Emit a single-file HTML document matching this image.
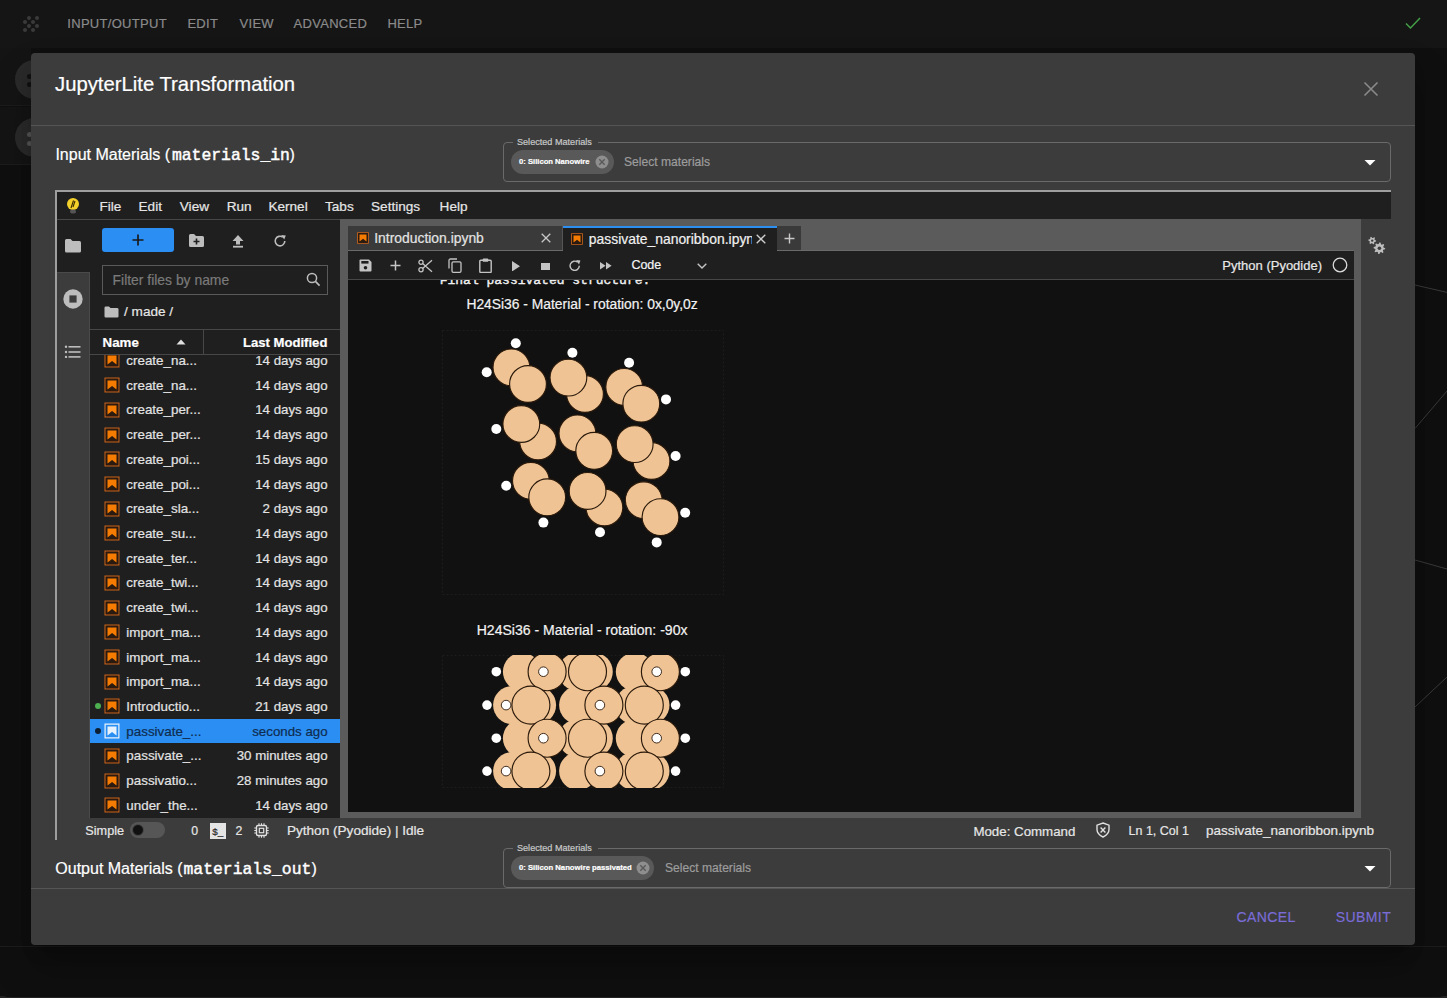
<!DOCTYPE html><html><head><meta charset="utf-8"><style>
html,body{margin:0;padding:0;width:1447px;height:998px;overflow:hidden;background:#0f0f0f;font-family:'Liberation Sans', sans-serif}
.r{position:absolute;box-sizing:border-box}
.t{position:absolute;line-height:1;white-space:nowrap;-webkit-text-stroke:0.2px currentColor}
</style></head><body>
<div class="r" style="left:0px;top:0px;width:1447px;height:998px;background:#0f0f0f;"></div>
<div class="r" style="left:0px;top:0px;width:1447px;height:48px;background:#151515;"></div>
<div class="r" style="left:0px;top:48px;width:31px;height:58px;background:#141414;border-bottom:1px solid #1c1c1c"></div>
<div class="r" style="left:0px;top:107px;width:31px;height:58px;background:#141414;border-bottom:1px solid #1c1c1c"></div>
<div class="r" style="left:14.5px;top:59.5px;width:39px;height:39px;border-radius:50%;background:#2a2a2a"></div>
<div class="r" style="left:14.5px;top:118px;width:39px;height:39px;border-radius:50%;background:#2a2a2a"></div>
<div class="r" style="left:26.5px;top:74.2px;width:5px;height:5px;border-radius:50%;background:#111"></div>
<div class="r" style="left:26.5px;top:82.3px;width:5px;height:5px;border-radius:50%;background:#111"></div>
<div class="r" style="left:26.5px;top:132.0px;width:5px;height:5px;border-radius:50%;background:#555"></div>
<div class="r" style="left:26.5px;top:140.5px;width:5px;height:5px;border-radius:50%;background:#555"></div>
<div class="r" style="left:27px;top:16px;width:4px;height:4px;border-radius:50%;background:#3a3a3a"></div>
<div class="r" style="left:35px;top:16px;width:4px;height:4px;border-radius:50%;background:#3a3a3a"></div>
<div class="r" style="left:23px;top:20px;width:4px;height:4px;border-radius:50%;background:#3a3a3a"></div>
<div class="r" style="left:31px;top:20px;width:4px;height:4px;border-radius:50%;background:#3a3a3a"></div>
<div class="r" style="left:27px;top:24px;width:4px;height:4px;border-radius:50%;background:#3a3a3a"></div>
<div class="r" style="left:35px;top:24px;width:4px;height:4px;border-radius:50%;background:#3a3a3a"></div>
<div class="r" style="left:23px;top:28px;width:4px;height:4px;border-radius:50%;background:#3a3a3a"></div>
<div class="r" style="left:31px;top:28px;width:4px;height:4px;border-radius:50%;background:#3a3a3a"></div>
<div class="t" style="left:67.30px;top:16.90px;font-size:13px;color:#8a8a8a;font-weight:400;font-family:'Liberation Sans', sans-serif;letter-spacing:0.3px;">INPUT/OUTPUT</div>
<div class="t" style="left:187.40px;top:16.90px;font-size:13px;color:#8a8a8a;font-weight:400;font-family:'Liberation Sans', sans-serif;letter-spacing:0.3px;">EDIT</div>
<div class="t" style="left:239.50px;top:16.90px;font-size:13px;color:#8a8a8a;font-weight:400;font-family:'Liberation Sans', sans-serif;letter-spacing:0.3px;">VIEW</div>
<div class="t" style="left:293.50px;top:16.90px;font-size:13px;color:#8a8a8a;font-weight:400;font-family:'Liberation Sans', sans-serif;letter-spacing:0.3px;">ADVANCED</div>
<div class="t" style="left:387.40px;top:16.90px;font-size:13px;color:#8a8a8a;font-weight:400;font-family:'Liberation Sans', sans-serif;letter-spacing:0.3px;">HELP</div>
<svg class="r" style="left:1404px;top:15px" width="18" height="16" viewBox="0 0 18 16"><path d="M2 8.5 L6.5 13 L16 3" fill="none" stroke="#43a047" stroke-width="1.5"/></svg>
<svg class="r" style="left:1415px;top:0" width="32" height="998" viewBox="0 0 32 998"><path d="M0 285 L32 292.4 M0 428.5 L32 391 M0 560 L32 569 M0 707 L32 677" stroke="#3a3a3a" stroke-width="1"/></svg>
<div class="r" style="left:0px;top:946px;width:1447px;height:1px;background:#1c1c1c;"></div>
<div class="r" style="left:0px;top:996px;width:1447px;height:2px;background:#242424;"></div>
<div class="r" style="left:0;top:947px;width:1447px;height:49.5px;background:#0f0f0f;border-radius:0 0 8px 8px"></div>
<div class="r" style="left:31px;top:53px;width:1384px;height:892px;background:#3c3c3c;border-radius:4px;box-shadow:0 11px 15px -7px rgba(0,0,0,.3),0 24px 38px 3px rgba(0,0,0,.2)"></div>
<div class="t" style="left:55.00px;top:73.82px;font-size:20.3px;color:#fff;font-weight:400;font-family:'Liberation Sans', sans-serif;letter-spacing:0px;">JupyterLite Transformation</div>
<svg class="r" style="left:1363px;top:81px" width="16" height="16" viewBox="0 0 16 16"><path d="M1.5 1.5 L14.5 14.5 M14.5 1.5 L1.5 14.5" stroke="#8a8a8a" stroke-width="1.6"/></svg>
<div class="r" style="left:31px;top:125px;width:1384px;height:1px;background:#555555;"></div>
<div class="t" style="left:55.40px;top:146.76px;font-size:16px;color:#fff;font-weight:400;font-family:'Liberation Sans', sans-serif;letter-spacing:0px;">Input Materials (</div>
<div class="t" style="left:171.90px;top:147.74px;font-size:16.4px;color:#fff;font-weight:400;font-family:'Liberation Mono', monospace;letter-spacing:0px;-webkit-text-stroke:0.45px #fff">materials_in</div>
<div class="t" style="left:289.50px;top:146.76px;font-size:16px;color:#fff;font-weight:400;font-family:'Liberation Sans', sans-serif;letter-spacing:0px;">)</div>
<div class="r" style="left:503px;top:142px;width:888px;height:40px;border:1px solid #6a6a6a;border-radius:4px"></div>
<div class="r" style="left:512.5px;top:140px;width:85px;height:4px;background:#3c3c3c;"></div>
<div class="t" style="left:517.00px;top:137.50px;font-size:9.1px;color:#c8c8c8;font-weight:400;font-family:'Liberation Sans', sans-serif;letter-spacing:0px;">Selected Materials</div>
<div class="r" style="left:511px;top:150px;width:102.6px;height:24px;border-radius:12px;background:#595959"></div>
<div class="t" style="left:519.00px;top:157.82px;font-size:7.65px;color:#fff;font-weight:700;font-family:'Liberation Sans', sans-serif;letter-spacing:0px;">0: Silicon Nanowire</div>
<svg class="r" style="left:595.1px;top:155px" width="14" height="14" viewBox="0 0 14 14"><circle cx="7" cy="7" r="6.5" fill="#8e8e8e"/><path d="M4.3 4.3 L9.7 9.7 M9.7 4.3 L4.3 9.7" stroke="#595959" stroke-width="1.4"/></svg>
<div class="t" style="left:624.00px;top:156.16px;font-size:12.1px;color:#9c9c9c;font-weight:400;font-family:'Liberation Sans', sans-serif;letter-spacing:0px;">Select materials</div>
<svg class="r" style="left:1364px;top:160px" width="12" height="6" viewBox="0 0 12 6"><path d="M0.5 0 L11.5 0 L6 5.5Z" fill="#fff"/></svg>
<div class="r" style="left:55px;top:190px;width:1336px;height:2px;background:#9e9e9e;"></div>
<div class="r" style="left:55px;top:190px;width:2px;height:650px;background:#9e9e9e;"></div>
<div class="r" style="left:57px;top:192px;width:1334px;height:27px;background:#1f1f1f;"></div>
<div class="r" style="left:57px;top:219px;width:1334px;height:1px;background:#474747;"></div>
<svg class="r" style="left:66px;top:197px" width="14" height="18" viewBox="0 0 14 18"><circle cx="7" cy="7" r="6" fill="#f3d02a"/><path d="M5 11 L7.5 3.5 M7 10 L9 4" stroke="#3a2a00" stroke-width="1.1"/><ellipse cx="7" cy="14.5" rx="3" ry="2" fill="#555"/></svg>
<div class="t" style="left:99.40px;top:199.69px;font-size:13.6px;color:#e6e6e6;font-weight:400;font-family:'Liberation Sans', sans-serif;letter-spacing:0px;">File</div>
<div class="t" style="left:138.50px;top:199.69px;font-size:13.6px;color:#e6e6e6;font-weight:400;font-family:'Liberation Sans', sans-serif;letter-spacing:0px;">Edit</div>
<div class="t" style="left:179.80px;top:199.69px;font-size:13.6px;color:#e6e6e6;font-weight:400;font-family:'Liberation Sans', sans-serif;letter-spacing:0px;">View</div>
<div class="t" style="left:226.70px;top:199.69px;font-size:13.6px;color:#e6e6e6;font-weight:400;font-family:'Liberation Sans', sans-serif;letter-spacing:0px;">Run</div>
<div class="t" style="left:268.40px;top:199.69px;font-size:13.6px;color:#e6e6e6;font-weight:400;font-family:'Liberation Sans', sans-serif;letter-spacing:0px;">Kernel</div>
<div class="t" style="left:325.00px;top:199.69px;font-size:13.6px;color:#e6e6e6;font-weight:400;font-family:'Liberation Sans', sans-serif;letter-spacing:0px;">Tabs</div>
<div class="t" style="left:371.00px;top:199.69px;font-size:13.6px;color:#e6e6e6;font-weight:400;font-family:'Liberation Sans', sans-serif;letter-spacing:0px;">Settings</div>
<div class="t" style="left:439.60px;top:199.69px;font-size:13.6px;color:#e6e6e6;font-weight:400;font-family:'Liberation Sans', sans-serif;letter-spacing:0px;">Help</div>
<div class="r" style="left:57px;top:220px;width:33px;height:598px;background:#3c3c3c;"></div>
<div class="r" style="left:57px;top:220px;width:33px;height:52px;background:#1f1f1f;"></div>
<div class="r" style="left:57px;top:272px;width:33px;height:1px;background:#4a4a4a;"></div>
<div class="r" style="left:89px;top:272px;width:1px;height:546px;background:#4a4a4a;"></div>
<svg class="r" style="left:64px;top:238px" width="18" height="15" viewBox="0 0 18 15"><path d="M1 2.5 Q1 1 2.5 1 L6.5 1 L8.5 3 L15.5 3 Q17 3 17 4.5 L17 13 Q17 14.5 15.5 14.5 L2.5 14.5 Q1 14.5 1 13 Z" fill="#bdbdbd"/></svg>
<svg class="r" style="left:63px;top:289px" width="20" height="20" viewBox="0 0 20 20"><circle cx="10" cy="10" r="9.7" fill="#bdbdbd"/><rect x="6.4" y="6.4" width="7.2" height="7.2" fill="#3c3c3c"/></svg>
<svg class="r" style="left:64px;top:344px" width="18" height="16" viewBox="0 0 18 16"><g fill="#bdbdbd"><circle cx="2" cy="2.8" r="1.2"/><circle cx="2" cy="8" r="1.2"/><circle cx="2" cy="12.9" r="1.2"/><rect x="4.5" y="2" width="12" height="1.6"/><rect x="4.5" y="7.2" width="12" height="1.6"/><rect x="4.5" y="12.1" width="12" height="1.6"/></g></svg>
<div class="r" style="left:90px;top:220px;width:250px;height:598px;background:#1f1f1f;"></div>
<div class="r" style="left:102px;top:228px;width:72px;height:24px;background:#2a8ef2;border-radius:3px"></div>
<svg class="r" style="left:131px;top:233px" width="14" height="14" viewBox="0 0 14 14"><path d="M7 1.5 V12.5 M1.5 7 H12.5" stroke="#1a1a1a" stroke-width="1.7"/></svg>
<svg class="r" style="left:188px;top:233px" width="17" height="15" viewBox="0 0 17 15"><path d="M1 2.5 Q1 1 2.5 1 L6 1 L8 3 L14.5 3 Q16 3 16 4.5 L16 12.5 Q16 14 14.5 14 L2.5 14 Q1 14 1 12.5 Z" fill="#bdbdbd"/><path d="M8.5 5.5 V11.5 M5.5 8.5 H11.5" stroke="#1f1f1f" stroke-width="1.6"/></svg>
<svg class="r" style="left:231px;top:234px" width="14" height="14" viewBox="0 0 14 14"><path d="M7 1 L12.5 7 H9 V10.5 H5 V7 H1.5 Z" fill="#bdbdbd"/><rect x="2" y="11.8" width="10" height="1.8" fill="#bdbdbd"/></svg>
<svg class="r" style="left:273px;top:234px" width="14" height="14" viewBox="0 0 14 14"><path d="M11.8 7 A4.8 4.8 0 1 1 9.9 3.2" fill="none" stroke="#bdbdbd" stroke-width="1.6"/><path d="M8.2 1 L12.8 1.6 L11.2 5.6 Z" fill="#bdbdbd"/></svg>
<div class="r" style="left:102px;top:265px;width:226px;height:30px;border:1px solid #5a5a5a"></div>
<div class="t" style="left:112.60px;top:273.53px;font-size:13.9px;color:#7a7a7a;font-weight:400;font-family:'Liberation Sans', sans-serif;letter-spacing:0px;">Filter files by name</div>
<svg class="r" style="left:306px;top:272px" width="15" height="15" viewBox="0 0 15 15"><circle cx="6" cy="6" r="4.6" fill="none" stroke="#bdbdbd" stroke-width="1.5"/><path d="M9.4 9.4 L13.6 13.6" stroke="#bdbdbd" stroke-width="1.7"/></svg>
<svg class="r" style="left:104px;top:306px" width="15" height="12" viewBox="0 0 15 12"><path d="M0.5 1.8 Q0.5 0.5 1.8 0.5 L5 0.5 L6.5 2 L13 2 Q14.5 2 14.5 3.3 L14.5 10.5 Q14.5 11.5 13.2 11.5 L1.8 11.5 Q0.5 11.5 0.5 10.5 Z" fill="#bdbdbd"/></svg>
<div class="t" style="left:124.00px;top:304.79px;font-size:13.6px;color:#e6e6e6;font-weight:400;font-family:'Liberation Sans', sans-serif;letter-spacing:0px;">/ made /</div>
<div class="r" style="left:90px;top:329px;width:250px;height:1px;background:#474747;"></div>
<div class="r" style="left:90px;top:354px;width:250px;height:1px;background:#474747;"></div>
<div class="r" style="left:203px;top:330px;width:1px;height:24px;background:#474747;"></div>
<div class="t" style="left:102.60px;top:336.24px;font-size:13.3px;color:#fff;font-weight:700;font-family:'Liberation Sans', sans-serif;letter-spacing:0px;">Name</div>
<svg class="r" style="left:176px;top:339px" width="10" height="6" viewBox="0 0 10 6"><path d="M0.5 5.5 L5 0.5 L9.5 5.5Z" fill="#e0e0e0"/></svg>
<div class="t" style="right:1119.60px;top:336.41px;font-size:13.1px;color:#fff;font-weight:700;font-family:'Liberation Sans', sans-serif;letter-spacing:0px">Last Modified</div>
<div class="r" style="left:0;top:355px;width:1447px;height:463px;overflow:hidden">
<svg class="r" style="left:103px;top:-3.60px" width="18" height="18" viewBox="0 0 22 22"><path d="M18.7 3.3v15.4H3.3V3.3h15.4m1.5-1.5H1.8v18.3h18.3l.1-18.3z" fill="#c8621a"/><rect x="3.3" y="3.3" width="15.4" height="15.4" fill="#2a1a10"/><path d="M16.5 16.5l-5.4-4.3-5.6 4.3v-11h11z" fill="#f57c00"/></svg>
<div class="t" style="left:126.3px;top:-1.04px;font-size:13.4px;color:#e3e3e3">create_na...</div>
<div class="t" style="right:1119.4px;top:-1.04px;font-size:13.3px;color:#e3e3e3">14 days ago</div>
<svg class="r" style="left:103px;top:21.12px" width="18" height="18" viewBox="0 0 22 22"><path d="M18.7 3.3v15.4H3.3V3.3h15.4m1.5-1.5H1.8v18.3h18.3l.1-18.3z" fill="#c8621a"/><rect x="3.3" y="3.3" width="15.4" height="15.4" fill="#2a1a10"/><path d="M16.5 16.5l-5.4-4.3-5.6 4.3v-11h11z" fill="#f57c00"/></svg>
<div class="t" style="left:126.3px;top:23.68px;font-size:13.4px;color:#e3e3e3">create_na...</div>
<div class="t" style="right:1119.4px;top:23.68px;font-size:13.3px;color:#e3e3e3">14 days ago</div>
<svg class="r" style="left:103px;top:45.84px" width="18" height="18" viewBox="0 0 22 22"><path d="M18.7 3.3v15.4H3.3V3.3h15.4m1.5-1.5H1.8v18.3h18.3l.1-18.3z" fill="#c8621a"/><rect x="3.3" y="3.3" width="15.4" height="15.4" fill="#2a1a10"/><path d="M16.5 16.5l-5.4-4.3-5.6 4.3v-11h11z" fill="#f57c00"/></svg>
<div class="t" style="left:126.3px;top:48.40px;font-size:13.4px;color:#e3e3e3">create_per...</div>
<div class="t" style="right:1119.4px;top:48.40px;font-size:13.3px;color:#e3e3e3">14 days ago</div>
<svg class="r" style="left:103px;top:70.56px" width="18" height="18" viewBox="0 0 22 22"><path d="M18.7 3.3v15.4H3.3V3.3h15.4m1.5-1.5H1.8v18.3h18.3l.1-18.3z" fill="#c8621a"/><rect x="3.3" y="3.3" width="15.4" height="15.4" fill="#2a1a10"/><path d="M16.5 16.5l-5.4-4.3-5.6 4.3v-11h11z" fill="#f57c00"/></svg>
<div class="t" style="left:126.3px;top:73.12px;font-size:13.4px;color:#e3e3e3">create_per...</div>
<div class="t" style="right:1119.4px;top:73.12px;font-size:13.3px;color:#e3e3e3">14 days ago</div>
<svg class="r" style="left:103px;top:95.28px" width="18" height="18" viewBox="0 0 22 22"><path d="M18.7 3.3v15.4H3.3V3.3h15.4m1.5-1.5H1.8v18.3h18.3l.1-18.3z" fill="#c8621a"/><rect x="3.3" y="3.3" width="15.4" height="15.4" fill="#2a1a10"/><path d="M16.5 16.5l-5.4-4.3-5.6 4.3v-11h11z" fill="#f57c00"/></svg>
<div class="t" style="left:126.3px;top:97.84px;font-size:13.4px;color:#e3e3e3">create_poi...</div>
<div class="t" style="right:1119.4px;top:97.84px;font-size:13.3px;color:#e3e3e3">15 days ago</div>
<svg class="r" style="left:103px;top:120.00px" width="18" height="18" viewBox="0 0 22 22"><path d="M18.7 3.3v15.4H3.3V3.3h15.4m1.5-1.5H1.8v18.3h18.3l.1-18.3z" fill="#c8621a"/><rect x="3.3" y="3.3" width="15.4" height="15.4" fill="#2a1a10"/><path d="M16.5 16.5l-5.4-4.3-5.6 4.3v-11h11z" fill="#f57c00"/></svg>
<div class="t" style="left:126.3px;top:122.56px;font-size:13.4px;color:#e3e3e3">create_poi...</div>
<div class="t" style="right:1119.4px;top:122.56px;font-size:13.3px;color:#e3e3e3">14 days ago</div>
<svg class="r" style="left:103px;top:144.72px" width="18" height="18" viewBox="0 0 22 22"><path d="M18.7 3.3v15.4H3.3V3.3h15.4m1.5-1.5H1.8v18.3h18.3l.1-18.3z" fill="#c8621a"/><rect x="3.3" y="3.3" width="15.4" height="15.4" fill="#2a1a10"/><path d="M16.5 16.5l-5.4-4.3-5.6 4.3v-11h11z" fill="#f57c00"/></svg>
<div class="t" style="left:126.3px;top:147.28px;font-size:13.4px;color:#e3e3e3">create_sla...</div>
<div class="t" style="right:1119.4px;top:147.28px;font-size:13.3px;color:#e3e3e3">2 days ago</div>
<svg class="r" style="left:103px;top:169.44px" width="18" height="18" viewBox="0 0 22 22"><path d="M18.7 3.3v15.4H3.3V3.3h15.4m1.5-1.5H1.8v18.3h18.3l.1-18.3z" fill="#c8621a"/><rect x="3.3" y="3.3" width="15.4" height="15.4" fill="#2a1a10"/><path d="M16.5 16.5l-5.4-4.3-5.6 4.3v-11h11z" fill="#f57c00"/></svg>
<div class="t" style="left:126.3px;top:172.00px;font-size:13.4px;color:#e3e3e3">create_su...</div>
<div class="t" style="right:1119.4px;top:172.00px;font-size:13.3px;color:#e3e3e3">14 days ago</div>
<svg class="r" style="left:103px;top:194.16px" width="18" height="18" viewBox="0 0 22 22"><path d="M18.7 3.3v15.4H3.3V3.3h15.4m1.5-1.5H1.8v18.3h18.3l.1-18.3z" fill="#c8621a"/><rect x="3.3" y="3.3" width="15.4" height="15.4" fill="#2a1a10"/><path d="M16.5 16.5l-5.4-4.3-5.6 4.3v-11h11z" fill="#f57c00"/></svg>
<div class="t" style="left:126.3px;top:196.72px;font-size:13.4px;color:#e3e3e3">create_ter...</div>
<div class="t" style="right:1119.4px;top:196.72px;font-size:13.3px;color:#e3e3e3">14 days ago</div>
<svg class="r" style="left:103px;top:218.88px" width="18" height="18" viewBox="0 0 22 22"><path d="M18.7 3.3v15.4H3.3V3.3h15.4m1.5-1.5H1.8v18.3h18.3l.1-18.3z" fill="#c8621a"/><rect x="3.3" y="3.3" width="15.4" height="15.4" fill="#2a1a10"/><path d="M16.5 16.5l-5.4-4.3-5.6 4.3v-11h11z" fill="#f57c00"/></svg>
<div class="t" style="left:126.3px;top:221.44px;font-size:13.4px;color:#e3e3e3">create_twi...</div>
<div class="t" style="right:1119.4px;top:221.44px;font-size:13.3px;color:#e3e3e3">14 days ago</div>
<svg class="r" style="left:103px;top:243.60px" width="18" height="18" viewBox="0 0 22 22"><path d="M18.7 3.3v15.4H3.3V3.3h15.4m1.5-1.5H1.8v18.3h18.3l.1-18.3z" fill="#c8621a"/><rect x="3.3" y="3.3" width="15.4" height="15.4" fill="#2a1a10"/><path d="M16.5 16.5l-5.4-4.3-5.6 4.3v-11h11z" fill="#f57c00"/></svg>
<div class="t" style="left:126.3px;top:246.16px;font-size:13.4px;color:#e3e3e3">create_twi...</div>
<div class="t" style="right:1119.4px;top:246.16px;font-size:13.3px;color:#e3e3e3">14 days ago</div>
<svg class="r" style="left:103px;top:268.32px" width="18" height="18" viewBox="0 0 22 22"><path d="M18.7 3.3v15.4H3.3V3.3h15.4m1.5-1.5H1.8v18.3h18.3l.1-18.3z" fill="#c8621a"/><rect x="3.3" y="3.3" width="15.4" height="15.4" fill="#2a1a10"/><path d="M16.5 16.5l-5.4-4.3-5.6 4.3v-11h11z" fill="#f57c00"/></svg>
<div class="t" style="left:126.3px;top:270.88px;font-size:13.4px;color:#e3e3e3">import_ma...</div>
<div class="t" style="right:1119.4px;top:270.88px;font-size:13.3px;color:#e3e3e3">14 days ago</div>
<svg class="r" style="left:103px;top:293.04px" width="18" height="18" viewBox="0 0 22 22"><path d="M18.7 3.3v15.4H3.3V3.3h15.4m1.5-1.5H1.8v18.3h18.3l.1-18.3z" fill="#c8621a"/><rect x="3.3" y="3.3" width="15.4" height="15.4" fill="#2a1a10"/><path d="M16.5 16.5l-5.4-4.3-5.6 4.3v-11h11z" fill="#f57c00"/></svg>
<div class="t" style="left:126.3px;top:295.60px;font-size:13.4px;color:#e3e3e3">import_ma...</div>
<div class="t" style="right:1119.4px;top:295.60px;font-size:13.3px;color:#e3e3e3">14 days ago</div>
<svg class="r" style="left:103px;top:317.76px" width="18" height="18" viewBox="0 0 22 22"><path d="M18.7 3.3v15.4H3.3V3.3h15.4m1.5-1.5H1.8v18.3h18.3l.1-18.3z" fill="#c8621a"/><rect x="3.3" y="3.3" width="15.4" height="15.4" fill="#2a1a10"/><path d="M16.5 16.5l-5.4-4.3-5.6 4.3v-11h11z" fill="#f57c00"/></svg>
<div class="t" style="left:126.3px;top:320.32px;font-size:13.4px;color:#e3e3e3">import_ma...</div>
<div class="t" style="right:1119.4px;top:320.32px;font-size:13.3px;color:#e3e3e3">14 days ago</div>
<svg class="r" style="left:103px;top:342.48px" width="18" height="18" viewBox="0 0 22 22"><path d="M18.7 3.3v15.4H3.3V3.3h15.4m1.5-1.5H1.8v18.3h18.3l.1-18.3z" fill="#c8621a"/><rect x="3.3" y="3.3" width="15.4" height="15.4" fill="#2a1a10"/><path d="M16.5 16.5l-5.4-4.3-5.6 4.3v-11h11z" fill="#f57c00"/></svg>
<div class="r" style="left:95px;top:348.48px;width:6px;height:6px;border-radius:50%;background:#4caf50"></div>
<div class="t" style="left:126.3px;top:345.04px;font-size:13.4px;color:#e3e3e3">Introductio...</div>
<div class="t" style="right:1119.4px;top:345.04px;font-size:13.3px;color:#e3e3e3">21 days ago</div>
<div class="r" style="left:90px;top:364.00px;width:250px;height:24.3px;background:#2a8ef2"></div>
<svg class="r" style="left:103px;top:367.20px" width="18" height="18" viewBox="0 0 22 22"><path d="M18.7 3.3v15.4H3.3V3.3h15.4m1.5-1.5H1.8v18.3h18.3l.1-18.3z" fill="#e8f2fd"/><path d="M16.5 16.5l-5.4-4.3-5.6 4.3v-11h11z" fill="#e8f2fd"/></svg>
<div class="r" style="left:95px;top:373.20px;width:6px;height:6px;border-radius:50%;background:#0d1f33"></div>
<div class="t" style="left:126.3px;top:369.76px;font-size:13.4px;color:#0f2c4f">passivate_...</div>
<div class="t" style="right:1119.4px;top:369.76px;font-size:13.3px;color:#0f2c4f">seconds ago</div>
<svg class="r" style="left:103px;top:391.92px" width="18" height="18" viewBox="0 0 22 22"><path d="M18.7 3.3v15.4H3.3V3.3h15.4m1.5-1.5H1.8v18.3h18.3l.1-18.3z" fill="#c8621a"/><rect x="3.3" y="3.3" width="15.4" height="15.4" fill="#2a1a10"/><path d="M16.5 16.5l-5.4-4.3-5.6 4.3v-11h11z" fill="#f57c00"/></svg>
<div class="t" style="left:126.3px;top:394.48px;font-size:13.4px;color:#e3e3e3">passivate_...</div>
<div class="t" style="right:1119.4px;top:394.48px;font-size:13.3px;color:#e3e3e3">30 minutes ago</div>
<svg class="r" style="left:103px;top:416.64px" width="18" height="18" viewBox="0 0 22 22"><path d="M18.7 3.3v15.4H3.3V3.3h15.4m1.5-1.5H1.8v18.3h18.3l.1-18.3z" fill="#c8621a"/><rect x="3.3" y="3.3" width="15.4" height="15.4" fill="#2a1a10"/><path d="M16.5 16.5l-5.4-4.3-5.6 4.3v-11h11z" fill="#f57c00"/></svg>
<div class="t" style="left:126.3px;top:419.20px;font-size:13.4px;color:#e3e3e3">passivatio...</div>
<div class="t" style="right:1119.4px;top:419.20px;font-size:13.3px;color:#e3e3e3">28 minutes ago</div>
<svg class="r" style="left:103px;top:441.36px" width="18" height="18" viewBox="0 0 22 22"><path d="M18.7 3.3v15.4H3.3V3.3h15.4m1.5-1.5H1.8v18.3h18.3l.1-18.3z" fill="#c8621a"/><rect x="3.3" y="3.3" width="15.4" height="15.4" fill="#2a1a10"/><path d="M16.5 16.5l-5.4-4.3-5.6 4.3v-11h11z" fill="#f57c00"/></svg>
<div class="t" style="left:126.3px;top:443.92px;font-size:13.4px;color:#e3e3e3">under_the...</div>
<div class="t" style="right:1119.4px;top:443.92px;font-size:13.3px;color:#e3e3e3">14 days ago</div>
</div>
<div class="r" style="left:340px;top:219px;width:1021px;height:599px;background:#5b5b5b;"></div>
<div class="r" style="left:348px;top:226px;width:215px;height:24px;background:#3a3a3a;border-right:1px solid #555"></div>
<div class="r" style="left:563px;top:226px;width:214px;height:25px;background:#1f1f1f;"></div>
<div class="r" style="left:563px;top:226px;width:214px;height:2px;background:#2d8ff0;"></div>
<div class="r" style="left:777px;top:226px;width:24px;height:24px;background:#3a3a3a;"></div>
<div class="r" style="left:801px;top:250px;width:553px;height:1px;background:#6a6a6a;"></div>
<div class="r" style="left:348px;top:250px;width:215px;height:1px;background:#6a6a6a;"></div>
<div class="r" style="left:777px;top:250px;width:24px;height:1px;background:#6a6a6a;"></div>
<svg class="r" style="left:356px;top:231px" width="14" height="14" viewBox="0 0 22 22"><path d="M18.7 3.3v15.4H3.3V3.3h15.4m1.5-1.5H1.8v18.3h18.3l.1-18.3z" fill="#c8621a"/><rect x="3.3" y="3.3" width="15.4" height="15.4" fill="#2a1a10"/><path d="M16.5 16.5l-5.4-4.3-5.6 4.3v-11h11z" fill="#f57c00"/></svg>
<div class="t" style="left:374.20px;top:232.23px;font-size:13.9px;color:#e3e3e3;font-weight:400;font-family:'Liberation Sans', sans-serif;letter-spacing:0px;">Introduction.ipynb</div>
<svg class="r" style="left:541px;top:233px" width="10" height="10" viewBox="0 0 10 10"><path d="M0.7 0.7 L9.3 9.3 M9.3 0.7 L0.7 9.3" stroke="#c8c8c8" stroke-width="1.3"/></svg>
<svg class="r" style="left:570px;top:231.5px" width="14" height="14" viewBox="0 0 22 22"><path d="M18.7 3.3v15.4H3.3V3.3h15.4m1.5-1.5H1.8v18.3h18.3l.1-18.3z" fill="#c8621a"/><rect x="3.3" y="3.3" width="15.4" height="15.4" fill="#2a1a10"/><path d="M16.5 16.5l-5.4-4.3-5.6 4.3v-11h11z" fill="#f57c00"/></svg>
<div class="r" style="left:588.8px;top:226px;width:163.5px;height:24px;overflow:hidden">
<div class="t" style="left:0;top:6.53px;font-size:13.9px;color:#f0f0f0">passivate_nanoribbon.ipynb</div>
</div>
<svg class="r" style="left:755.5px;top:234px" width="10" height="10" viewBox="0 0 10 10"><path d="M0.7 0.7 L9.3 9.3 M9.3 0.7 L0.7 9.3" stroke="#d0d0d0" stroke-width="1.3"/></svg>
<svg class="r" style="left:784px;top:233px" width="11" height="11" viewBox="0 0 11 11"><path d="M5.5 0.5 V10.5 M0.5 5.5 H10.5" stroke="#c8c8c8" stroke-width="1.4"/></svg>
<div class="r" style="left:348px;top:251px;width:1006px;height:28px;background:#1f1f1f;"></div>
<div class="r" style="left:348px;top:279px;width:1006px;height:1px;background:#474747;"></div>
<svg class="r" style="left:358.5px;top:259px" width="13" height="13" viewBox="0 0 13 13"><path d="M1.5 0.5 H10 L12.5 3 V11.5 Q12.5 12.5 11.5 12.5 H1.5 Q0.5 12.5 0.5 11.5 V1.5 Q0.5 0.5 1.5 0.5Z" fill="#c4c4c4"/><rect x="2.3" y="2" width="7.2" height="2.6" fill="#1f1f1f"/><circle cx="6.5" cy="8.8" r="1.8" fill="#1f1f1f"/></svg>
<svg class="r" style="left:389.5px;top:260px" width="11" height="11" viewBox="0 0 11 11"><path d="M5.5 0.5 V10.5 M0.5 5.5 H10.5" stroke="#c4c4c4" stroke-width="1.5"/></svg>
<svg class="r" style="left:417.5px;top:258.8px" width="15" height="14" viewBox="0 0 15 14"><circle cx="3" cy="3.2" r="2.1" fill="none" stroke="#c4c4c4" stroke-width="1.3"/><circle cx="3" cy="10.8" r="2.1" fill="none" stroke="#c4c4c4" stroke-width="1.3"/><path d="M4.6 4.6 L14 12.8 M4.6 9.4 L14 1.2" stroke="#c4c4c4" stroke-width="1.3"/></svg>
<svg class="r" style="left:447.5px;top:258.2px" width="14" height="15" viewBox="0 0 14 15"><path d="M1 10.5 V2.5 Q1 1 2.5 1 H9" fill="none" stroke="#c4c4c4" stroke-width="1.3"/><rect x="4" y="3.8" width="9" height="10.5" rx="1.3" fill="none" stroke="#c4c4c4" stroke-width="1.3"/></svg>
<svg class="r" style="left:478.5px;top:257.5px" width="13" height="15.5" viewBox="0 0 13 15.5"><rect x="0.8" y="2.3" width="11.4" height="12.2" rx="1" fill="none" stroke="#c4c4c4" stroke-width="1.4"/><rect x="3.8" y="0.6" width="5.4" height="3.2" rx="0.6" fill="#c4c4c4"/></svg>
<svg class="r" style="left:511.5px;top:260.8px" width="8" height="10.5" viewBox="0 0 8 10.5"><path d="M0 0 L8 5.25 L0 10.5Z" fill="#c4c4c4"/></svg>
<div class="r" style="left:541px;top:262.5px;width:8.5px;height:7.8px;background:#c4c4c4;"></div>
<svg class="r" style="left:569px;top:260px" width="12" height="11" viewBox="0 0 12 11"><path d="M10.3 5.8 A4.6 4.6 0 1 1 8.6 2.2" fill="none" stroke="#c4c4c4" stroke-width="1.4"/><path d="M7.2 0 L11.4 0.6 L10 4.4Z" fill="#c4c4c4"/></svg>
<svg class="r" style="left:599.5px;top:262px" width="12" height="7.5" viewBox="0 0 12 7.5"><path d="M0 0 L5.6 3.75 L0 7.5Z M6 0 L11.6 3.75 L6 7.5Z" fill="#c4c4c4"/></svg>
<div class="t" style="left:631.40px;top:259.02px;font-size:12.5px;color:#f5f5f5;font-weight:400;font-family:'Liberation Sans', sans-serif;letter-spacing:0px;">Code</div>
<svg class="r" style="left:697px;top:262.6px" width="10" height="6" viewBox="0 0 10 6"><path d="M0.7 0.7 L5 5 L9.3 0.7" fill="none" stroke="#c4c4c4" stroke-width="1.4"/></svg>
<div class="t" style="left:1222.30px;top:258.50px;font-size:13px;color:#e8e8e8;font-weight:400;font-family:'Liberation Sans', sans-serif;letter-spacing:0px;">Python (Pyodide)</div>
<svg class="r" style="left:1332px;top:257px" width="16" height="16" viewBox="0 0 16 16"><circle cx="8" cy="8" r="6.8" fill="none" stroke="#dcdcdc" stroke-width="1.25"/></svg>
<div class="r" style="left:348px;top:280px;width:1006px;height:532px;background:#111111;"></div>
<div class="r" style="left:348px;top:280px;width:1006px;height:532px;overflow:hidden">
<div class="t" style="left:91.69999999999999px;top:-5.86px;font-size:13px;font-family:'Liberation Mono', monospace;color:#f0f0f0;-webkit-text-stroke:0.4px #f0f0f0">Final passivated structure:</div>
</div>
<div class="t" style="left:466.40px;top:298.18px;font-size:13.85px;color:#f2f2f2;font-weight:400;font-family:'Liberation Sans', sans-serif;letter-spacing:0px;">H24Si36 - Material - rotation: 0x,0y,0z</div>
<div class="t" style="left:476.70px;top:623.01px;font-size:14.05px;color:#f2f2f2;font-weight:400;font-family:'Liberation Sans', sans-serif;letter-spacing:0px;">H24Si36 - Material - rotation: -90x</div>
<svg class="r" style="left:442px;top:330px" width="282" height="265" viewBox="0 0 282 265"><rect x="0.5" y="0.5" width="281" height="264" fill="#111" stroke="#1d1d1d" stroke-width="1" stroke-dasharray="2 2"/><circle cx="69.40" cy="37.40" r="18.4" fill="#efc393" stroke="#2b1a0c" stroke-width="1.15"/><circle cx="86.00" cy="54.00" r="18.4" fill="#efc393" stroke="#2b1a0c" stroke-width="1.15"/><circle cx="143.00" cy="64.00" r="18.4" fill="#efc393" stroke="#2b1a0c" stroke-width="1.15"/><circle cx="126.40" cy="47.60" r="18.4" fill="#efc393" stroke="#2b1a0c" stroke-width="1.15"/><circle cx="182.20" cy="56.90" r="18.4" fill="#efc393" stroke="#2b1a0c" stroke-width="1.15"/><circle cx="199.30" cy="73.70" r="18.4" fill="#efc393" stroke="#2b1a0c" stroke-width="1.15"/><circle cx="96.10" cy="111.50" r="18.4" fill="#efc393" stroke="#2b1a0c" stroke-width="1.15"/><circle cx="79.30" cy="94.00" r="18.4" fill="#efc393" stroke="#2b1a0c" stroke-width="1.15"/><circle cx="135.40" cy="103.40" r="18.4" fill="#efc393" stroke="#2b1a0c" stroke-width="1.15"/><circle cx="152.20" cy="120.80" r="18.4" fill="#efc393" stroke="#2b1a0c" stroke-width="1.15"/><circle cx="209.50" cy="131.00" r="18.4" fill="#efc393" stroke="#2b1a0c" stroke-width="1.15"/><circle cx="192.70" cy="114.10" r="18.4" fill="#efc393" stroke="#2b1a0c" stroke-width="1.15"/><circle cx="88.90" cy="150.80" r="18.4" fill="#efc393" stroke="#2b1a0c" stroke-width="1.15"/><circle cx="105.20" cy="167.30" r="18.4" fill="#efc393" stroke="#2b1a0c" stroke-width="1.15"/><circle cx="162.40" cy="177.50" r="18.4" fill="#efc393" stroke="#2b1a0c" stroke-width="1.15"/><circle cx="145.60" cy="160.90" r="18.4" fill="#efc393" stroke="#2b1a0c" stroke-width="1.15"/><circle cx="201.70" cy="170.20" r="18.4" fill="#efc393" stroke="#2b1a0c" stroke-width="1.15"/><circle cx="218.50" cy="187.10" r="18.4" fill="#efc393" stroke="#2b1a0c" stroke-width="1.15"/><circle cx="73.80" cy="13.30" r="5" fill="#fff"/><circle cx="44.70" cy="42.30" r="5" fill="#fff"/><circle cx="130.40" cy="22.80" r="5" fill="#fff"/><circle cx="187.10" cy="32.70" r="5" fill="#fff"/><circle cx="224.00" cy="69.40" r="5" fill="#fff"/><circle cx="54.30" cy="99.00" r="5" fill="#fff"/><circle cx="233.60" cy="126.00" r="5" fill="#fff"/><circle cx="64.20" cy="155.70" r="5" fill="#fff"/><circle cx="101.40" cy="192.60" r="5" fill="#fff"/><circle cx="158.00" cy="202.20" r="5" fill="#fff"/><circle cx="243.20" cy="182.70" r="5" fill="#fff"/><circle cx="214.70" cy="212.40" r="5" fill="#fff"/></svg>
<svg class="r" style="left:442px;top:655px" width="282" height="133" viewBox="0 0 282 133"><rect x="0.5" y="0.5" width="281" height="132" fill="#111" stroke="#1d1d1d" stroke-width="1" stroke-dasharray="2 2"/><circle cx="79.90" cy="16.70" r="19" fill="#efc393"/><circle cx="135.40" cy="16.70" r="19" fill="#efc393"/><circle cx="151.80" cy="16.70" r="19" fill="#efc393"/><circle cx="192.80" cy="16.70" r="19" fill="#efc393"/><circle cx="70.10" cy="50.10" r="19" fill="#efc393"/><circle cx="95.10" cy="50.10" r="19" fill="#efc393"/><circle cx="136.10" cy="50.10" r="19" fill="#efc393"/><circle cx="192.00" cy="50.10" r="19" fill="#efc393"/><circle cx="208.50" cy="50.10" r="19" fill="#efc393"/><circle cx="79.90" cy="83.20" r="19" fill="#efc393"/><circle cx="135.40" cy="83.20" r="19" fill="#efc393"/><circle cx="151.80" cy="83.20" r="19" fill="#efc393"/><circle cx="192.80" cy="83.20" r="19" fill="#efc393"/><circle cx="70.10" cy="116.10" r="19" fill="#efc393"/><circle cx="95.10" cy="116.10" r="19" fill="#efc393"/><circle cx="136.10" cy="116.10" r="19" fill="#efc393"/><circle cx="192.00" cy="116.10" r="19" fill="#efc393"/><circle cx="208.50" cy="116.10" r="19" fill="#efc393"/><circle cx="105.10" cy="16.70" r="19" fill="#efc393" stroke="#2b1a0c" stroke-width="1.15"/><circle cx="145.50" cy="16.70" r="19" fill="#efc393" stroke="#2b1a0c" stroke-width="1.15"/><circle cx="218.40" cy="16.70" r="19" fill="#efc393" stroke="#2b1a0c" stroke-width="1.15"/><circle cx="88.90" cy="50.10" r="19" fill="#efc393" stroke="#2b1a0c" stroke-width="1.15"/><circle cx="161.90" cy="50.10" r="19" fill="#efc393" stroke="#2b1a0c" stroke-width="1.15"/><circle cx="202.30" cy="50.10" r="19" fill="#efc393" stroke="#2b1a0c" stroke-width="1.15"/><circle cx="105.10" cy="83.20" r="19" fill="#efc393" stroke="#2b1a0c" stroke-width="1.15"/><circle cx="145.50" cy="83.20" r="19" fill="#efc393" stroke="#2b1a0c" stroke-width="1.15"/><circle cx="218.40" cy="83.20" r="19" fill="#efc393" stroke="#2b1a0c" stroke-width="1.15"/><circle cx="88.90" cy="116.10" r="19" fill="#efc393" stroke="#2b1a0c" stroke-width="1.15"/><circle cx="161.90" cy="116.10" r="19" fill="#efc393" stroke="#2b1a0c" stroke-width="1.15"/><circle cx="202.30" cy="116.10" r="19" fill="#efc393" stroke="#2b1a0c" stroke-width="1.15"/><circle cx="101.40" cy="16.70" r="4.8" fill="#fff" stroke="#2b1a0c" stroke-width="0.9"/><circle cx="214.70" cy="16.70" r="4.8" fill="#fff" stroke="#2b1a0c" stroke-width="0.9"/><circle cx="64.10" cy="50.10" r="4.8" fill="#fff" stroke="#2b1a0c" stroke-width="0.9"/><circle cx="157.90" cy="50.10" r="4.8" fill="#fff" stroke="#2b1a0c" stroke-width="0.9"/><circle cx="101.40" cy="83.20" r="4.8" fill="#fff" stroke="#2b1a0c" stroke-width="0.9"/><circle cx="214.70" cy="83.20" r="4.8" fill="#fff" stroke="#2b1a0c" stroke-width="0.9"/><circle cx="64.10" cy="116.10" r="4.8" fill="#fff" stroke="#2b1a0c" stroke-width="0.9"/><circle cx="157.90" cy="116.10" r="4.8" fill="#fff" stroke="#2b1a0c" stroke-width="0.9"/><circle cx="54.30" cy="16.70" r="4.8" fill="#fff"/><circle cx="243.30" cy="16.70" r="4.8" fill="#fff"/><circle cx="45.00" cy="50.10" r="4.8" fill="#fff"/><circle cx="233.60" cy="50.10" r="4.8" fill="#fff"/><circle cx="54.30" cy="83.20" r="4.8" fill="#fff"/><circle cx="243.30" cy="83.20" r="4.8" fill="#fff"/><circle cx="45.00" cy="116.10" r="4.8" fill="#fff"/><circle cx="233.60" cy="116.10" r="4.8" fill="#fff"/></svg>
<div class="r" style="left:1361px;top:219px;width:30px;height:599px;background:#3c3c3c;"></div>
<svg class="r" style="left:1366px;top:234px" width="22" height="22" viewBox="0 0 22 22"><polygon points="10.10,6.60 9.97,7.61 8.54,7.95 8.11,8.51 8.15,9.98 7.21,10.37 6.20,9.30 5.50,9.21 4.25,9.98 3.44,9.36 3.86,7.95 3.59,7.30 2.30,6.60 2.43,5.59 3.86,5.25 4.29,4.69 4.25,3.22 5.19,2.83 6.20,3.90 6.90,3.99 8.15,3.22 8.96,3.84 8.54,5.25 8.81,5.90" fill="#bdbdbd"/><circle cx="6.2" cy="6.6" r="1.2" fill="#3c3c3c"/><polygon points="19.20,14.20 19.09,15.33 17.28,15.81 16.89,16.53 17.50,18.30 16.62,19.02 15.01,18.08 14.22,18.32 13.40,20.00 12.27,19.89 11.79,18.08 11.07,17.69 9.30,18.30 8.58,17.42 9.52,15.81 9.28,15.02 7.60,14.20 7.71,13.07 9.52,12.59 9.91,11.87 9.30,10.10 10.18,9.38 11.79,10.32 12.58,10.08 13.40,8.40 14.53,8.51 15.01,10.32 15.73,10.71 17.50,10.10 18.22,10.98 17.28,12.59 17.52,13.38" fill="#bdbdbd"/><circle cx="13.4" cy="14.2" r="1.8" fill="#3c3c3c"/></svg>
<div class="r" style="left:57px;top:818px;width:1334px;height:22px;background:#3c3c3c;"></div>
<div class="t" style="left:85.30px;top:825.05px;font-size:12.7px;color:#e6e6e6;font-weight:400;font-family:'Liberation Sans', sans-serif;letter-spacing:0px;">Simple</div>
<div class="r" style="left:129.7px;top:822px;width:35.3px;height:15.8px;background:#565656;border-radius:8px"></div>
<div class="r" style="left:131.5px;top:823.6px;width:12.8px;height:12.8px;border-radius:50%;background:#111;border:1.5px solid #4a4a4a"></div>
<div class="t" style="left:191.30px;top:825.09px;font-size:12.3px;color:#e6e6e6;font-weight:400;font-family:'Liberation Sans', sans-serif;letter-spacing:0px;">0</div>
<div class="r" style="left:210px;top:823.2px;width:16.1px;height:15.5px;background:#e4e4e4;"></div>
<div class="t" style="left:212.30px;top:826.70px;font-size:9.8px;color:#2a2a2a;font-weight:400;font-family:'Liberation Sans', sans-serif;letter-spacing:0px;">$_</div>
<div class="t" style="left:235.40px;top:825.09px;font-size:12.3px;color:#e6e6e6;font-weight:400;font-family:'Liberation Sans', sans-serif;letter-spacing:0px;">2</div>
<svg class="r" style="left:253.5px;top:822.5px" width="15" height="15" viewBox="0 0 15 15"><rect x="2.5" y="2.5" width="10" height="10" rx="1.5" fill="none" stroke="#e0e0e0" stroke-width="1.4"/><rect x="5.3" y="5.3" width="4.4" height="4.4" fill="none" stroke="#e0e0e0" stroke-width="1.2"/><path d="M5 0.3V2.5 M7.5 0.3V2.5 M10 0.3V2.5 M5 12.5V14.7 M7.5 12.5V14.7 M10 12.5V14.7 M0.3 5H2.5 M0.3 7.5H2.5 M0.3 10H2.5 M12.5 5H14.7 M12.5 7.5H14.7 M12.5 10H14.7" stroke="#e0e0e0" stroke-width="1.1"/></svg>
<div class="t" style="left:286.90px;top:824.29px;font-size:13.6px;color:#e6e6e6;font-weight:400;font-family:'Liberation Sans', sans-serif;letter-spacing:0px;">Python (Pyodide) | Idle</div>
<div class="t" style="left:973.40px;top:824.54px;font-size:13.3px;color:#e6e6e6;font-weight:400;font-family:'Liberation Sans', sans-serif;letter-spacing:0px;">Mode: Command</div>
<svg class="r" style="left:1094.5px;top:821.5px" width="16" height="16" viewBox="0 0 16 16"><path d="M8 1 L14 3.2 V7.5 Q14 12 8 15 Q2 12 2 7.5 V3.2Z" fill="none" stroke="#e0e0e0" stroke-width="1.4"/><path d="M5.6 5.6 L10.4 10.4 M10.4 5.6 L5.6 10.4" stroke="#e0e0e0" stroke-width="1.4"/></svg>
<div class="t" style="left:1128.50px;top:825.22px;font-size:12.5px;color:#e6e6e6;font-weight:400;font-family:'Liberation Sans', sans-serif;letter-spacing:0px;">Ln 1, Col 1</div>
<div class="t" style="left:1206.00px;top:824.37px;font-size:13.5px;color:#e6e6e6;font-weight:400;font-family:'Liberation Sans', sans-serif;letter-spacing:0px;">passivate_nanoribbon.ipynb</div>
<div class="t" style="left:55.30px;top:860.86px;font-size:16px;color:#fff;font-weight:400;font-family:'Liberation Sans', sans-serif;letter-spacing:0px;">Output Materials (</div>
<div class="t" style="left:183.50px;top:861.84px;font-size:16.4px;color:#fff;font-weight:400;font-family:'Liberation Mono', monospace;letter-spacing:0px;-webkit-text-stroke:0.45px #fff">materials_out</div>
<div class="t" style="left:311.50px;top:860.86px;font-size:16px;color:#fff;font-weight:400;font-family:'Liberation Sans', sans-serif;letter-spacing:0px;">)</div>
<div class="r" style="left:503px;top:848px;width:888px;height:40px;border:1px solid #6a6a6a;border-radius:4px"></div>
<div class="r" style="left:512.5px;top:846px;width:85px;height:4px;background:#3c3c3c;"></div>
<div class="t" style="left:517.00px;top:843.50px;font-size:9.1px;color:#c8c8c8;font-weight:400;font-family:'Liberation Sans', sans-serif;letter-spacing:0px;">Selected Materials</div>
<div class="r" style="left:511px;top:856px;width:143px;height:24px;border-radius:12px;background:#595959"></div>
<div class="t" style="left:519.00px;top:863.78px;font-size:7.7px;color:#fff;font-weight:700;font-family:'Liberation Sans', sans-serif;letter-spacing:0px;">0: Silicon Nanowire passivated</div>
<svg class="r" style="left:635.5px;top:861px" width="14" height="14" viewBox="0 0 14 14"><circle cx="7" cy="7" r="6.5" fill="#8e8e8e"/><path d="M4.3 4.3 L9.7 9.7 M9.7 4.3 L4.3 9.7" stroke="#595959" stroke-width="1.4"/></svg>
<div class="t" style="left:665.00px;top:862.16px;font-size:12.1px;color:#9c9c9c;font-weight:400;font-family:'Liberation Sans', sans-serif;letter-spacing:0px;">Select materials</div>
<svg class="r" style="left:1364px;top:866px" width="12" height="6" viewBox="0 0 12 6"><path d="M0.5 0 L11.5 0 L6 5.5Z" fill="#fff"/></svg>
<div class="r" style="left:31px;top:888px;width:1384px;height:1px;background:#555555;"></div>
<div class="t" style="left:1236.60px;top:910.15px;font-size:14px;color:#7a6cd8;font-weight:400;font-family:'Liberation Sans', sans-serif;letter-spacing:0.4px;">CANCEL</div>
<div class="t" style="left:1335.80px;top:910.15px;font-size:14px;color:#7a6cd8;font-weight:400;font-family:'Liberation Sans', sans-serif;letter-spacing:0.4px;">SUBMIT</div>
</body></html>
